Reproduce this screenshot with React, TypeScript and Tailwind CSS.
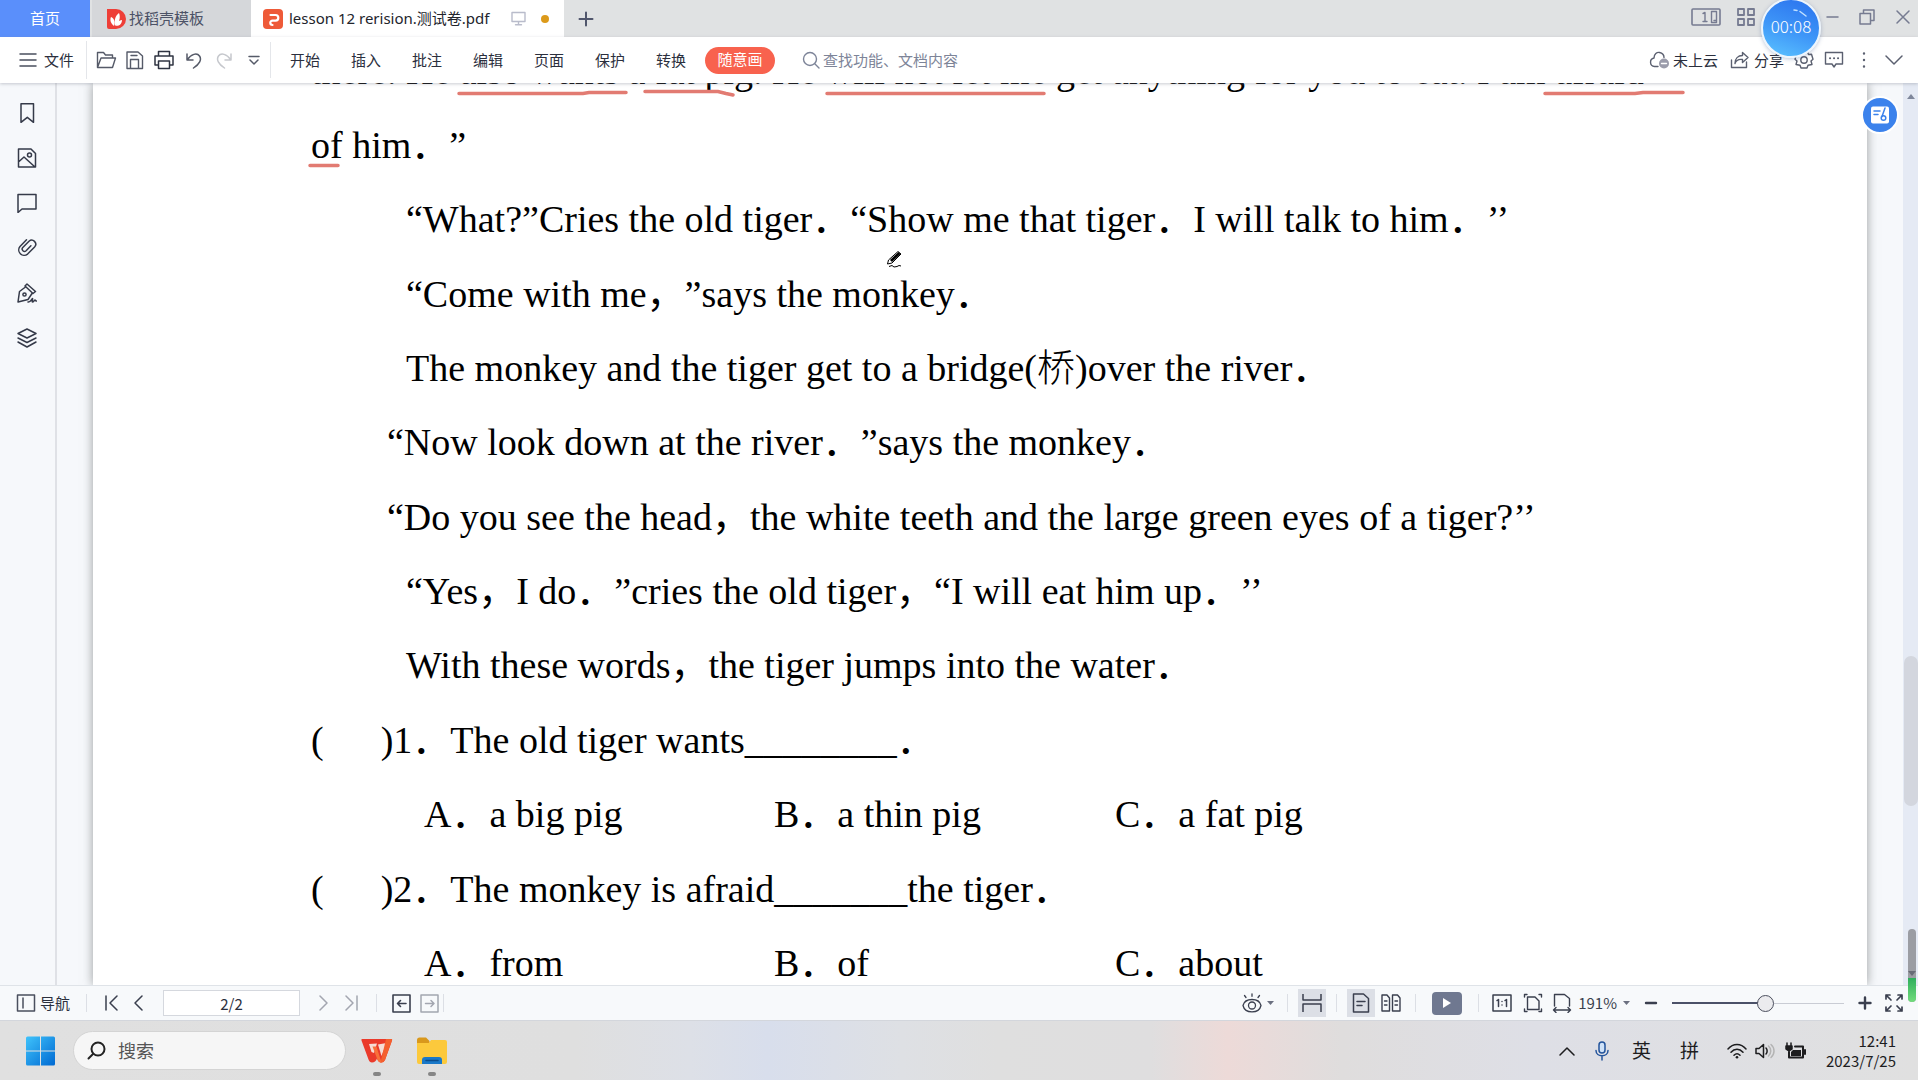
import React from "react";

type Box = { w?: number; h?: number; c?: string; sw?: number; vb?: string; children: React.ReactNode };

function Svg({ w = 20, h = 20, c = "", sw = 1.5, vb, children }: Box) {
  return (
    <svg width={w} height={h} viewBox={vb ?? `0 0 ${w} ${h}`} fill="none" stroke="currentColor" strokeWidth={sw} strokeLinejoin="round" strokeLinecap="round" className={`shrink-0 ${c}`} aria-hidden="true">
      {children}
    </svg>
  );
}

function IconButton({ label, c = "", children }: { label: string; c?: string; children: React.ReactNode }) {
  return (
    <button type="button" aria-label={label} className={`flex shrink-0 items-center justify-center ${c}`}>
      {children}
    </button>
  );
}

function TabBar() {
  return (
    <div className="flex h-[37px] shrink-0 items-stretch bg-[#e0e2e3] text-[15px]">
      <button type="button" className="w-[90px] bg-[#5a8ffb] pb-px text-white">首页</button>
      <button type="button" className="ml-0.5 flex w-[159px] items-center gap-[3px] bg-[#d5d7da] pl-3.5 text-[#4c5266]">
        <Svg w={20} h={22} sw={0}>
          <path d="M1 1h9a10 10 0 0 1 0 20H3a2 2 0 0 1-2-2z" fill="#ee3e37" />
          <path d="M8 18C4 15 4 11 5 9c3 1 4 4 3 9zM9 18c-1-5 0-10 4-13 2 5 0 10-4 13zM10 18c1-4 3-6 6-6 0 3-2 6-6 6z" fill="#fff" />
        </Svg>
        找稻壳模板
      </button>
      <div className="flex w-[313px] items-center bg-white pl-3 text-[#22242c]">
        <Svg w={20} h={22} sw={0}>
          <rect y="1" width="20" height="20" rx="4" fill="#ee5a38" />
          <path d="M7.500 7h5a2.800 2.800 0 0 1 0 5.600H9.500a2.200 2.200 0 1 0 0 4.400" stroke="#fff" strokeWidth="2.200" />
        </Svg>
        <span className="ml-1.5 w-[208px] font-['Noto_Sans','Noto_Sans_CJK_SC',sans-serif] whitespace-nowrap">lesson 12 rerision.测试卷.pdf</span>
        <Svg w={15} h={15} c="ml-3.5 text-[#b9bccb]" sw={1.4}>
          <path d="M1 1.500h13v9H1zM7.500 10.500v3M4.500 13.800h6" />
        </Svg>
        <span className="ml-[15px] size-2 rounded-full bg-[#dc9a1a]" />
      </div>
      <IconButton label="新建标签" c="w-[44px] text-[#50566c]">
        <Svg w={16} h={16} sw={2}><path d="M8 1.500v13M1.500 8h13" /></Svg>
      </IconButton>
      <div className="ml-auto flex items-center pr-[7px] pb-[3px] text-[#767b91]">
        <IconButton label="窗口布局">
          <Svg w={30} h={18} sw={1.6}>
            <rect x="1" y="1" width="28" height="16" rx="1" />
            <path d="M12 5.500l2-1v9M12 13.500h4M20.500 3.500h5v11h-5zM23 12.500h2" strokeWidth="1.400" />
          </Svg>
        </IconButton>
        <IconButton label="应用" c="ml-4">
          <Svg w={18} h={18} sw={1.8}>
            <path d="M1 1h6v6H1zM11 1h6v6h-6zM1 11h6v6H1zM11 11h6v6h-6z" />
          </Svg>
        </IconButton>
        <IconButton label="最小化" c="ml-[71px]"><Svg w={13} h={16}><path d="M1 8h11" /></Svg></IconButton>
        <IconButton label="还原" c="ml-5">
          <Svg w={16} h={16}><path d="M1 4.500h10.500V15H1zM4.500 4.500V1H15v10.500h-3.500" /></Svg>
        </IconButton>
        <IconButton label="关闭" c="ml-5"><Svg w={16} h={16}><path d="M2 2l12 12M14 2L2 14" /></Svg></IconButton>
      </div>
    </div>
  );
}

const menus = ["开始", "插入", "批注", "编辑", "页面", "保护", "转换"];

function Toolbar() {
  return (
    <div className="relative z-10 flex h-[46px] shrink-0 items-center bg-white text-[15px] text-[#2b2f3d] shadow-[0_1px_3px_rgba(120,125,140,0.4)]">
      <button type="button" className="flex w-[87px] items-center gap-[7px] border-r border-[#e4e6ea] py-2 pl-[19px]">
        <Svg w={18} h={16} c="text-[#4a4f5e]"><path d="M1 2h16M1 8h16M1 14h16" /></Svg>
        文件
      </button>
      <div className="flex w-[184px] items-center border-r border-[#e4e6ea] py-2 text-[#555a68]">
        <IconButton label="打开" c="ml-2">
          <Svg w={22} h={20} sw={1.4}><path d="M2.500 17.500v-15h6l2 2.500h7v3M2.500 17.500L6 8h14.500l-3 9.500z" /></Svg>
        </IconButton>
        <IconButton label="保存" c="ml-[9px]">
          <Svg w={18} h={20} sw={1.4}><path d="M1 2h11l4.500 4v12.500H1zM4.500 18V9.500h8V18M5 5.500h6" /></Svg>
        </IconButton>
        <IconButton label="打印" c="ml-2.5 text-[#2f3442]">
          <Svg w={20} h={20} sw={1.5}><path d="M4.500 6V1.500h11V6M4.500 15H1V6h18v9h-3.500M4.500 11h11v7.500h-11z" /></Svg>
        </IconButton>
        <IconButton label="撤销" c="ml-[11px]">
          <Svg w={18} h={18}><path d="M2 3v6h6M2.500 8.500C6 3 12 1.500 14.500 5s0 8-6 12" /></Svg>
        </IconButton>
        <IconButton label="重做" c="ml-3 text-[#c6c8cd]">
          <Svg w={18} h={18}><path d="M16 3v6h-6M15.500 8.500C12 3 6 1.500 3.500 5s0 8 6 12" /></Svg>
        </IconButton>
        <IconButton label="更多" c="ml-[15px]">
          <Svg w={12} h={12}><path d="M1 2.500h10M2 6l4 4 4-4" /></Svg>
        </IconButton>
      </div>
      <nav className="ml-[19px] flex gap-[31px]">
        {menus.map((m) => (
          <button key={m} type="button">{m}</button>
        ))}
      </nav>
      <button type="button" className="ml-[19px] h-[27px] w-[70px] rounded-full bg-[#f8624e] pb-0.5 text-white">随意画</button>
      <label className="ml-[27px] flex items-center gap-[3px] text-[#7d8498]">
        <Svg w={18} h={18} sw={1.4}><circle cx="8" cy="8" r="6.500" /><path d="M13 13l4 4" /></Svg>
        <input type="text" aria-label="查找" placeholder="查找功能、文档内容" className="w-[160px] bg-transparent outline-none placeholder:text-[#7d8498]" />
      </label>
      <div className="ml-auto flex items-center pr-3.5 text-[#5b6070]">
        <button type="button" className="flex items-center gap-1 text-[#2b2f3d]">
          <Svg w={20} h={18} sw={1.4} c="text-[#5b6070]">
            <path d="M9 15.500H5.500a4.300 4.300 0 0 1-.5-8.500C5 3 8 1 10.500 1.500s4.500 2.500 4.500 5" />
            <circle cx="15" cy="12.500" r="5" fill="#9b9cab" stroke="none" />
            <path d="M12.500 12.500h5" stroke="#fff" />
          </Svg>
          未上云
        </button>
        <button type="button" className="ml-3 flex items-center gap-1 text-[#2b2f3d]">
          <Svg w={20} h={18} sw={1.4} c="text-[#5b6070]">
            <path d="M1.500 9v7.500h15V11M12.500 1.500l5.500 5-5.500 5V8.500C8.500 8 6 9.500 5 12.500c0-5 3-8 7.500-8z" />
          </Svg>
          分享
        </button>
        <IconButton label="设置" c="ml-2.5">
          <Svg w={20} h={20} sw={1.4}>
            <path d="M6.500 2h7l1 2.500 3-.3 1.500 5-2 1.800 1 3.500-4 .8-1 2.700H7l-1-2.700-4-.8 1-3.500-2-1.800 1.500-5 3 .3z" />
            <circle cx="10" cy="10" r="3.200" />
          </Svg>
        </IconButton>
        <IconButton label="评论" c="ml-2.5">
          <Svg w={20} h={18} sw={1.4}>
            <path d="M1.500 1.500h17v11.500h-6.500l-2 3-2-3H1.500z" />
            <path d="M6 7.300h.1M10 7.300h.1M14 7.300h.1" strokeWidth="2" />
          </Svg>
        </IconButton>
        <IconButton label="更多选项" c="ml-[18px]">
          <Svg w={4} h={18} sw={2.4}><path d="M2 2.500v.1M2 9v.1M2 15.500v.1" /></Svg>
        </IconButton>
        <IconButton label="收起" c="ml-[18px]">
          <Svg w={20} h={12}><path d="M2 2l8 8 8-8" /></Svg>
        </IconButton>
      </div>
    </div>
  );
}

function SideBar() {
  return (
    <aside className="flex w-[57px] shrink-0 flex-col items-center gap-[25px] border-r-2 border-[#dfe1e6] bg-[#f6f8fb] pt-5 pr-0.5 text-[#353a49]">
      <IconButton label="书签"><Svg><path d="M4 .8h12.500v18.500l-6.200-5-6.300 5z" /></Svg></IconButton>
      <IconButton label="缩略图">
        <Svg><path d="M1.500 1h12.500l4.500 4.500V19h-17zM1.500 14l5.500-5 11 10" /><circle cx="12.500" cy="7" r="2" /></Svg>
      </IconButton>
      <IconButton label="批注"><Svg><path d="M1 1.500h18V16H5l-4 3.500z" /></Svg></IconButton>
      <IconButton label="附件">
        <Svg><path d="M9.500 1.800L3 8.500a5.400 5.400 0 0 0 7.600 7.600l7-7.200a4 4 0 0 0-5.600-5.700l-6.200 6.300a2.300 2.300 0 0 0 3.300 3.200l4.800-5" /></Svg>
      </IconButton>
      <IconButton label="签名">
        <Svg><path d="M10 1l8.500 7.500-2.500 2L8 3zM8.500 4L2.500 8.500 1 19l10-2.500 4-6M11 19c2.500.5 4-3.500 4.500-3.500s-1 3.500 0 3.500 2-2 2.500-2 .5 1.500 1.500 1" /><circle cx="7.500" cy="11.500" r="1.600" /></Svg>
      </IconButton>
      <IconButton label="图层">
        <Svg><path d="M10 1l9 4.500-9 4.500-9-4.500zM1 10l9 4.500 9-4.500M1 14l9 5 9-5" /></Svg>
      </IconButton>
    </aside>
  );
}

function Line({ c = "", children }: { c?: string; children: React.ReactNode }) {
  return <p className={`whitespace-pre ${c}`}>{children}</p>;
}

function Options({ a, b, c }: { a: string; b: string; c: string }) {
  return (
    <div className="grid grid-cols-[350px_341px_auto] pl-[113px] whitespace-pre">
      <span>A．{a}</span>
      <span>B．{b}</span>
      <span>C．{c}</span>
    </div>
  );
}

function Page() {
  return (
    <article className="relative min-w-0 flex-1 bg-white pl-[218px] font-['Liberation_Serif','Noto_Sans_CJK_SC',serif] text-[38px] leading-[74px] text-black shadow-[0_0_10px_rgba(90,95,95,0.6)] [text-spacing-trim:space-all]">
      <div className="-mt-[49px] flex flex-col gap-px">
        <section>
          <Line>there. He also wants a fat pig. He will not let me get anything for you to eat. I am afraid</Line>
          <Line>of him．”</Line>
          <Line c="pl-[95px]">“What?”Cries the old tiger．“Show me that tiger．I will talk to him．’’</Line>
        </section>
        <section>
          <Line c="pl-[95px]">“Come with me，”says the monkey．</Line>
          <Line c="pl-[95px]">The monkey and the tiger get to a bridge(<span className="font-light">桥</span>)over the river．</Line>
          <Line c="pl-[76px]">“Now look down at the river．”says the monkey．</Line>
        </section>
        <section>
          <Line c="pl-[76px]">“Do you see the head，the white teeth and the large green eyes of a tiger?’’</Line>
          <Line c="pl-[95px]">“Yes，I do．”cries the old tiger，“I will eat him up．’’</Line>
          <Line c="pl-[95px]">With these words，the tiger jumps into the water．</Line>
        </section>
        <section>
          <Line>(      )1．The old tiger wants________．</Line>
          <Options a="a big pig" b="a thin pig" c="a fat pig" />
        </section>
        <section>
          <Line>(      )2．The monkey is afraid_______the tiger．</Line>
          <Options a="from" b="of" c="about" />
        </section>
      </div>
      <svg width="1600" height="100" viewBox="0 0 1600 100" className="absolute top-0 left-0" fill="none" stroke="#e27b72" strokeWidth="3.500" strokeLinecap="round" aria-hidden="true">
        <path d="M366 10.500h124l6-1h37M552 8.500h73l8 2 7 1.500M734 10.500h217M1452 10.500h90l8-1h40M217 82.500h28" />
      </svg>
      <svg width="18" height="20" viewBox="0 0 18 20" className="absolute top-[167px] left-[793px]" fill="none" stroke="#000" aria-hidden="true">
        <path d="M1.500 14l1-4L12 1.500 15 4 6 13z" fill="#fff" />
        <path d="M5 11L13.500 3" strokeWidth="3" />
        <path d="M3 16.500l3-1 2 1.500 3-.5 2-1 2 .5" />
      </svg>
    </article>
  );
}

function Sep({ c = "" }: { c?: string }) {
  return <span className={`h-[18px] w-px shrink-0 bg-[#dcdfe5] ${c}`} />;
}

function StatusBar() {
  return (
    <footer className="relative flex h-[35px] shrink-0 items-center justify-between border-t border-[#dfe3e8] bg-[#f7f9fb] text-[#3a3f4e]">
      <div className="flex items-center">
        <button type="button" className="ml-4 flex items-center gap-1 text-[15px] text-[#2b2f3d]">
          <Svg w={20} h={18} c="text-[#4a4f5e]"><path d="M1.500 1h17v16h-17zM7 4v10" /></Svg>
          导航
        </button>
        <Sep c="ml-4" />
        <IconButton label="第一页" c="ml-[17px]"><Svg w={14} h={16}><path d="M2 1v14M13 1L6 8l7 7" /></Svg></IconButton>
        <IconButton label="上一页" c="ml-[14px]"><Svg w={12} h={16}><path d="M10 1L3 8l7 7" /></Svg></IconButton>
        <input type="text" aria-label="页码" defaultValue="2/2" className="ml-[19px] h-[26px] w-[137px] border border-[#d5d8de] bg-white text-center text-[15px] text-[#2b2f3d] outline-none" />
        <IconButton label="下一页" c="ml-[18px] text-[#a3a6b0]"><Svg w={12} h={16}><path d="M2 1l7 7-7 7" /></Svg></IconButton>
        <IconButton label="最后一页" c="ml-[15px] text-[#a3a6b0]"><Svg w={14} h={16}><path d="M12 1v14M1 1l7 7-7 7" /></Svg></IconButton>
        <Sep c="ml-[17px]" />
        <IconButton label="后退" c="ml-[15px]"><Svg w={19} h={19} sw={1.6}><path d="M1 1h17v17H1zM14 9.500H5.500M8.500 6.500l-3 3 3 3" /></Svg></IconButton>
        <IconButton label="前进" c="ml-[9px] text-[#a3a6b0]"><Svg w={19} h={19}><path d="M1 1h17v17H1zM5.500 9.500H14M11 6.500l3 3-3 3" /></Svg></IconButton>
        <Sep c="ml-1" />
      </div>
      <div className="flex items-center pr-3.5">
        <IconButton label="护眼模式" c="gap-1">
          <Svg w={22} h={20} sw={1.3}>
            <circle cx="11" cy="12.500" r="3.500" /><path d="M2 12.500c2-8 16-8 18 0-2 8.500-16 8.500-18 0zM11 .8v2.500M3.500 2.500l1.500 2M18.500 2.500l-1.500 2" />
          </Svg>
          <Svg w={7} h={5} sw={0}><path d="M0 0h7L3.500 4z" fill="#6b7080" /></Svg>
        </IconButton>
        <Sep c="ml-[13px]" />
        <IconButton label="连续阅读" c="ml-2.5 h-7 w-7 bg-[#dcdfe6]">
          <Svg w={20} h={20}><path d="M1 1v6h18V1M1 19v-8h18v8" strokeLinecap="butt" /></Svg>
        </IconButton>
        <Sep c="ml-2.5" />
        <IconButton label="单页" c="ml-2.5 h-7 w-7 bg-[#dcdfe6]">
          <Svg w={18} h={20}><path d="M1.500 1h10l5 4.500V19h-15zM5 8.500h8M5 12.500h5" /></Svg>
        </IconButton>
        <IconButton label="双页" c="ml-1.5">
          <Svg w={20} h={20} sw={1.4}><path d="M1 2h5l2.500 3v13H1zM11.500 2h5L19 5v13h-7.500zM3.500 8h2.500M3.500 12h2.500M14 8h2.500M14 12h2.500" /></Svg>
        </IconButton>
        <Sep c="ml-3.5" />
        <IconButton label="播放" c="ml-4 h-[23px] w-[30px] rounded-sm bg-[#6f7890]">
          <Svg w={10} h={12} sw={0}><path d="M1 1l8 5-8 5z" fill="#fff" /></Svg>
        </IconButton>
        <Sep c="ml-4" />
        <IconButton label="实际大小" c="ml-[13px]">
          <Svg w={20} h={18}><path d="M1 1h18v16H1zM5 6.500l1.500-1v7M13 6.500l1.500-1v7M10 7.500v.1M10 11v.1" /></Svg>
        </IconButton>
        <IconButton label="适合页面" c="ml-[11px]">
          <Svg w={20} h={20} sw={1.4}><path d="M4.500 4h7.500l4 4v8.500H4.500zM1.500 4V1.500H4M16 1.500h2.500V4M1.500 16v2.500H4M16 18.500h2.500V16" /></Svg>
        </IconButton>
        <IconButton label="适合宽度" c="ml-[9px]">
          <Svg w={20} h={20} sw={1.4}><path d="M2.500 13V1.500h10l5 4V13M1.500 17h17M4 14.500L1.500 17 4 19.500M16 14.500l2.500 2.500-2.500 2.500" /></Svg>
        </IconButton>
        <button type="button" aria-label="缩放比例" className="ml-1.5 flex items-center gap-1.5 text-[15px]">
          191%
          <Svg w={7} h={5} sw={0}><path d="M0 0h7L3.500 4z" fill="#6b7080" /></Svg>
        </button>
        <IconButton label="缩小" c="ml-3.5"><Svg w={14} h={14} sw={2.4}><path d="M2 7h10" /></Svg></IconButton>
        <label className="relative ml-3.5 flex h-5 w-[172px] items-center">
          <span className="h-0.5 w-[86px] bg-[#4b5168]" />
          <span className="h-px flex-1 bg-[#c9ccd4]" />
          <span className="absolute left-[85px] size-[17px] rounded-full border-[1.5px] border-[#4b4f5e] bg-[#ebebee]" />
          <input type="range" aria-label="缩放" min={10} max={400} defaultValue={191} className="absolute inset-0 opacity-0" />
        </label>
        <IconButton label="放大" c="ml-3.5"><Svg w={14} h={14} sw={2.4}><path d="M7 1.500v11M1.500 7h11" /></Svg></IconButton>
        <IconButton label="全屏" c="ml-3"><Svg w={20} h={20} sw={1.7}><path d="M2 6V2h4M2 2l5 5M14 2h4v4M18 2l-5 5M2 14v4h4M2 18l5-5M18 14v4h-4M18 18l-5-5" /></Svg></IconButton>
      </div>
    </footer>
  );
}

function TaskBar() {
  return (
    <div className="flex h-[60px] shrink-0 items-center justify-between border-t border-[#d3d6dc] bg-[linear-gradient(90deg,#e0e0e0_0%,#dfdfdf_30%,#dde0e7_36%,#d8deec_40%,#dee0e4_47%,#dfdfdf_52%,#dfdedf_60%,#eddad8_64%,#e8dbda_66%,#dfdddd_70%,#dedfe6_80%,#e0e0e0_100%)] pr-[22px] pl-[26px]">
      <div className="flex items-center">
        <IconButton label="开始菜单">
          <Svg w={30} h={30} sw={0}>
            <defs>
              <linearGradient id="win" x1="0" y1="0" x2="1" y2="1"><stop stopColor="#3fc3fb" /><stop offset="1" stopColor="#0069d2" /></linearGradient>
            </defs>
            <path d="M0 2q0-1.500 1.500-1.500H14v14H0zM15 .5h12.500Q29 .5 29 2v12.500H15zM0 15.500h14v14H1.500Q0 29.500 0 28zM15 15.500h14V28q0 1.500-1.500 1.500H15z" fill="url(#win)" />
          </Svg>
        </IconButton>
        <label className="ml-[17px] flex h-[39px] w-[273px] items-center gap-3 rounded-full border border-[#d4d4d4] bg-[#f6f6f6] pl-[13px] text-[#222]">
          <Svg w={19} h={19} sw={2}><circle cx="11" cy="8" r="6.500" /><path d="M6 13l-4.500 4.500" /></Svg>
          <input type="text" aria-label="搜索" placeholder="搜索" className="w-[180px] bg-transparent text-[18px] outline-none placeholder:text-[#555]" />
        </label>
        <IconButton label="WPS Office" c="relative ml-[15px] h-[58px] w-8">
          <Svg w={32} h={26} sw={0}>
            <path d="M1 1h29.500q1 0 .5 1.500L24 22q-1.500 3-4.500 2.500-2.500-.5-3.500-4-1.500 4-5 4-2.500 0-3.500-3L.5 2.500Q0 1 1 1z" fill="#ea3a2b" />
            <path d="M17 6.500L25.500 5 20.500 18z" fill="#f6ddd6" />
            <path d="M8 6l8-.5-3 9.500-2.500-1z" fill="#f6ddd6" />
            <path d="M11.500 8.500l4 0 5 16q-3 .5-4.500-4z" fill="#f8703a" />
            <path d="M25 1h5.500q1 0 .5 1.500L24 22q-1.500 3-4.500 2.500z" fill="#f4602f" />
          </Svg>
          <span className="absolute bottom-1 h-1 w-2 rounded-full bg-[#858585]" />
        </IconButton>
        <IconButton label="文件资源管理器" c="relative ml-[23px] h-[58px] w-8">
          <Svg w={30} h={28} sw={0}>
            <path d="M0 3q0-2.500 2.500-2.500h6.500l3.500 3.500v4H0z" fill="#d9981c" />
            <path d="M0 6h12l2-3h14q2 0 2 2v20q0 2-2 2H2q-2 0-2-2z" fill="#fcc93c" />
            <path d="M5 27v-4q0-3 3-3h14q3 0 3 3v4z" fill="#1a78c8" />
            <path d="M9 23.500h12" stroke="#0b4c8c" strokeWidth="1.500" />
          </Svg>
          <span className="absolute bottom-1 h-1 w-2 rounded-full bg-[#858585]" />
        </IconButton>
      </div>
      <div className="flex items-center text-[#1d1d1f]">
        <IconButton label="显示隐藏的图标"><Svg w={16} h={10}><path d="M1 9l7-7 7 7" /></Svg></IconButton>
        <IconButton label="麦克风" c="ml-5 text-[#23549c]">
          <Svg w={14} h={20}><rect x="4" y="1" width="6" height="11" rx="3" fill="#cfe2f8" /><path d="M1 9.500c0 7 12 7 12 0M7 15v4" /></Svg>
        </IconButton>
        <button type="button" className="ml-[23px] text-[19px]">英</button>
        <button type="button" className="ml-[29px] text-[19px]">拼</button>
        <IconButton label="网络" c="ml-7">
          <Svg w={20} h={16}><path d="M1 6c5-6 13-6 18 0M4 9.300c3.500-4 8.500-4 12 0M7 12.300c2-2 4-2 6 0" /><circle cx="10" cy="14.200" r="1.300" fill="currentColor" stroke="none" /></Svg>
        </IconButton>
        <IconButton label="音量" c="ml-2">
          <Svg w={20} h={16}><path d="M1 5.500h3L8.500 1.500v13L4 10.500H1z" /><path d="M11 5c1.500 1.500 1.500 4.500 0 6" /><path d="M13.500 3c3 2.500 3 7.500 0 10M16 1.500c4 3.500 4 9.500 0 13" stroke="#b4b4b4" /></Svg>
        </IconButton>
        <IconButton label="电池" c="ml-2.5">
          <Svg w={22} h={18}><path d="M4 10v5.500h14V4.500H10M20 8v4" strokeWidth="2" /><path d="M8 8h8v6H6v-4z" fill="currentColor" stroke="none" /><path d="M2 1v2.500M6 1v2.500M1 4h6v3q-3 3-6 0zM4 8v3" fill="currentColor" /></Svg>
        </IconButton>
        <div className="ml-[19px] text-right text-[15px] leading-5">
          <div>12:41</div>
          <div>2023/7/25</div>
        </div>
      </div>
    </div>
  );
}

export default function App() {
  return (
    <div className="relative flex h-screen flex-col overflow-hidden font-['Noto_Sans_CJK_SC',sans-serif]">
      <TabBar />
      <Toolbar />
      <main className="flex min-h-0 flex-1 overflow-hidden bg-[#f6f8fb]">
        <SideBar />
        <div className="flex min-w-0 flex-1 overflow-hidden px-9">
          <Page />
        </div>
        <div className="relative w-[15px] shrink-0 bg-[#e5eaf4]">
          <svg width="8" height="5" viewBox="0 0 8 5" className="absolute top-[11px] left-1" aria-hidden="true"><path d="M0 5h8L4 0z" fill="#7f879b" /></svg>
          <div className="absolute top-[573px] left-px h-[150px] w-3.5 rounded-full bg-[#d3d6de]" />
        </div>
      </main>
      <StatusBar />
      <TaskBar />
      <button type="button" aria-label="转换为文档" className="absolute top-[96px] right-[19px] z-20 flex size-[38px] items-center justify-center rounded-full border-2 border-white bg-[#3b82ec]">
        <Svg w={18} h={18} sw={0}>
          <rect width="18" height="17" rx="2" y="0.500" fill="#fff" />
          <path d="M3 5h6M3 8.500h4M14 2l-3 8.500" stroke="#3b82ec" strokeWidth="1.500" />
          <circle cx="12.500" cy="12" r="2.300" stroke="#3b82ec" strokeWidth="1.500" />
        </Svg>
      </button>
      <div className="absolute top-[-2px] right-[97px] z-20 flex size-[60px] items-center justify-center rounded-full border-2 border-[#edf5fd] bg-[linear-gradient(200deg,#2f7bf0_15%,#3f97f8_55%,#5cc4ff_100%)] pb-1 text-[17px] font-light text-white shadow-[0_1px_4px_rgba(60,90,140,0.35)]">
        00:08
        <svg width="16" height="10" viewBox="0 0 16 10" className="absolute top-2 right-2.5" fill="none" stroke="#bfe0ff" strokeWidth="1.500" strokeLinecap="round" aria-hidden="true">
          <path d="M1 2l3 .5M7 3.500l6 4.500" />
        </svg>
      </div>
      <div className="absolute right-0.5 bottom-[78px] z-20 flex h-[73px] w-2 flex-col overflow-hidden rounded-full bg-[#9b9da3]">
        <svg width="8" height="5" viewBox="0 0 8 5" className="mt-[42px]" aria-hidden="true"><path d="M0 0h8L4 5z" fill="#676b76" /></svg>
        <div className="mt-0.5 flex-1 bg-[linear-gradient(180deg,#2fae5c,#72dc7c)]" />
      </div>
    </div>
  );
}
